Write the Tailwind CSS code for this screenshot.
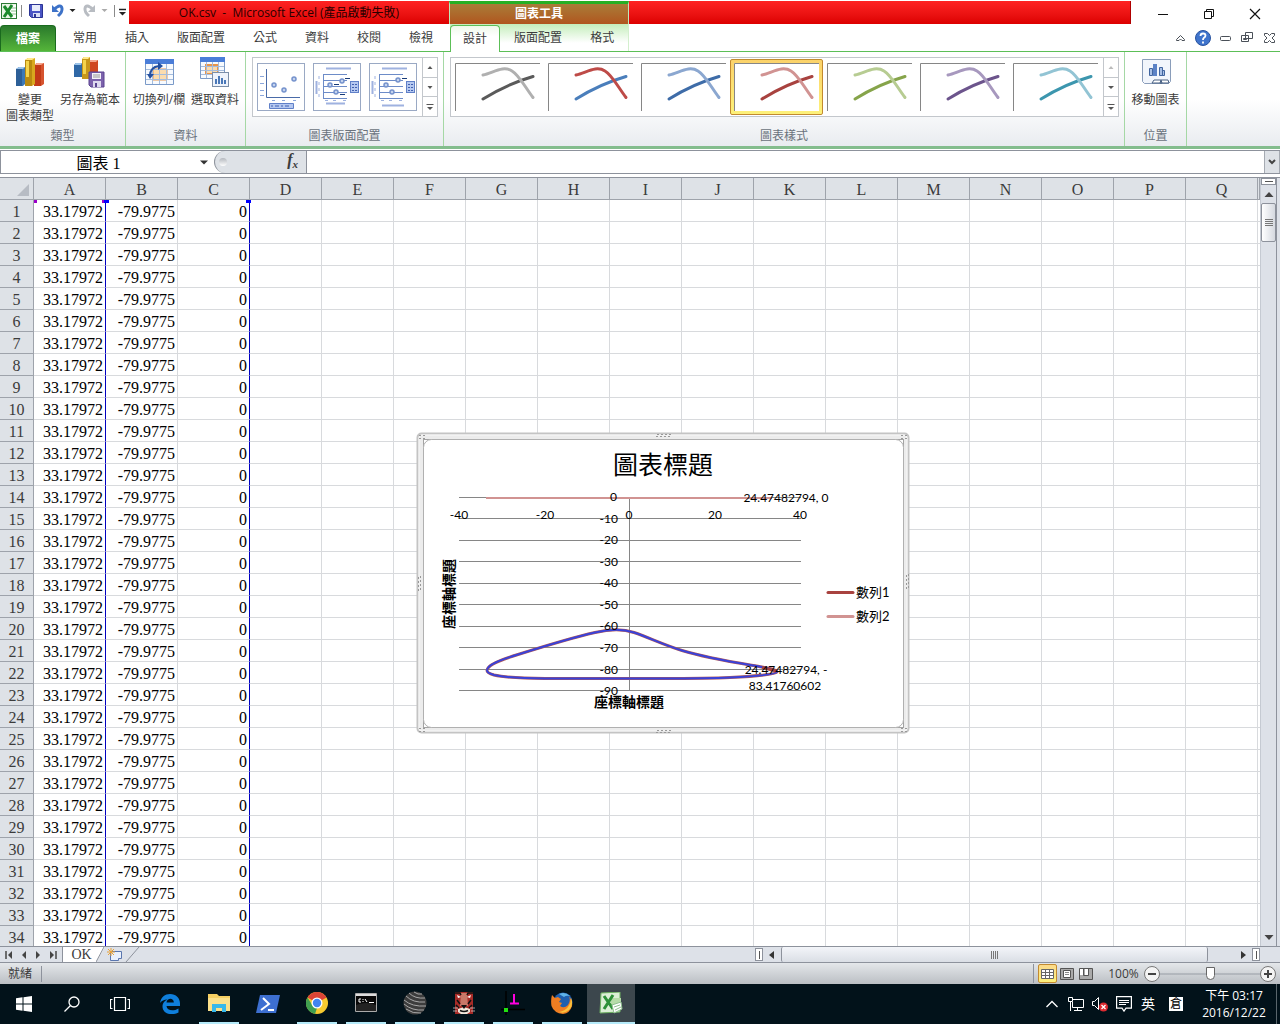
<!DOCTYPE html>
<html lang="zh-Hant">
<head>
<meta charset="utf-8">
<title>OK.csv - Microsoft Excel</title>
<script src="https://cdn.jsdelivr.net/npm/@tailwindcss/browser@4"></script>
</head>
<body class="flex h-screen flex-col overflow-hidden bg-white font-['Open_Sans','Noto_Sans_CJK_TC',sans-serif] text-xs text-[#3b3b3b]">

<!-- Title bar and ribbon tabs -->
<header class="relative flex h-[51px] shrink-0 flex-col">
  <div class="flex h-6 items-stretch">
    <div class="flex w-[129px] shrink-0 items-center">
      <svg class="h-6 w-[129px]" viewBox="0 0 129 24">
        <rect x="1.5" y="3.5" width="15" height="15" fill="#eaf5e6" stroke="#2c7a35"/>
        <path d="M10 5h6v13h-6z" fill="#fff"/><path d="M11 8h5M11 11h5M11 14h5" stroke="#8fc08f"/>
        <path d="M4 6l8 11M12 5L4 17" stroke="#1c8a2c" stroke-width="3"/>
        <path d="M21.500 5v12" stroke="#8a8a8a"/>
        <path d="M29.500 4.500h13v13h-11l-2-2z" fill="#4a55c4" stroke="#2b3494"/><rect x="32" y="5" width="8" height="6" fill="#e8ecfa"/><rect x="33" y="13" width="7" height="4" fill="#d9def5"/><rect x="34" y="14" width="2" height="3" fill="#2b3494"/>
        <path d="M54 9.500Q61 3 62 8.500Q62.500 12 58 16" fill="none" stroke="#3d72c8" stroke-width="3"/><path d="M52 5v7h7z" fill="#3d72c8"/>
        <path d="M69.500 9h6l-3 3z" fill="#222"/>
        <path d="M93 9.500Q86 3 85 8.500Q84.500 12 89 16" fill="none" stroke="#b8bcc2" stroke-width="3"/><path d="M95 5v7h-7z" fill="#b8bcc2"/>
        <path d="M101.500 9h6l-3 3z" fill="#aaa"/>
        <path d="M114.500 5v12" stroke="#8a8a8a"/><path d="M119 9.500h7" stroke="#222" stroke-width="1.500"/><path d="M119 12h7l-3.500 3.500z" fill="#222"/>
      </svg>
    </div>
    <h1 class="mt-px flex w-[320px] shrink-0 items-center justify-center whitespace-pre bg-linear-to-b from-[#ff2222] to-[#dc0000] text-[#2a0000]">OK.csv  -  Microsoft Excel (產品啟動失敗)</h1>
    <div class="mt-px flex w-[180px] shrink-0 items-center justify-center border-x border-t-3 border-x-[#bfe8b8] border-t-[#25b025] bg-linear-to-b from-[#a87c38] to-[#b0551e] font-bold text-white">圖表工具</div>
    <div class="mt-px min-w-0 flex-1 border-r border-[#b00000] bg-linear-to-b from-[#ff2222] to-[#dc0000]"></div>
    <div class="flex w-[149px] shrink-0 items-center justify-end pt-1 pr-[2px]">
      <button aria-label="最小化" class="flex w-[46px] justify-center"><svg class="h-4 w-4" viewBox="0 0 16 16"><path d="M3 8.500h10" stroke="#111"/></svg></button>
      <button aria-label="還原" class="flex w-[46px] justify-center"><svg class="h-4 w-4" viewBox="0 0 16 16" fill="none" stroke="#111"><path d="M3.500 5.500h7v7h-7zM5.500 5.500v-2h7v7h-2"/></svg></button>
      <button aria-label="關閉" class="flex w-[46px] justify-center"><svg class="h-4 w-4" viewBox="0 0 16 16"><path d="M3 3l10 10M13 3L3 13" stroke="#111" stroke-width="1.200"/></svg></button>
    </div>
  </div>
  <nav class="flex flex-1 items-stretch">
    <button class="mt-px mr-[3px] w-14 rounded-t-sm border border-b-0 border-[#1a6a1e] bg-linear-to-b from-[#2a7a2c] to-[#55b53a] font-bold text-white">檔案</button>
    <button class="px-[14px]">常用</button>
    <button class="px-[14px]">插入</button>
    <button class="px-[14px]">版面配置</button>
    <button class="px-[14px]">公式</button>
    <button class="px-[14px]">資料</button>
    <button class="px-[14px]">校閱</button>
    <button class="px-[14px]">檢視</button>
    <div class="ml-[3px] flex border-r border-[#d3efcd] bg-linear-to-b from-[#c4edbb] to-[#ffffff] to-70%">
      <button class="z-10 mt-px -mb-px w-[50px] rounded-t-sm border border-b-0 border-[#5cbf57] bg-linear-to-b from-[#eef9ea] to-white to-40%">設計</button>
      <button class="px-[14px]">版面配置</button>
      <button class="px-[14px]">格式</button>
    </div>
    <div class="ml-auto flex items-center">
      <button aria-label="最小化功能區"><svg class="h-5 w-[22px]" viewBox="0 0 22 20"><path d="M6.500 11.500L10.500 7.500L14.500 11.500V12.500H12L10.500 11L9 12.500H6.500z" fill="#fff" stroke="#4a5058"/></svg></button>
      <button aria-label="說明"><svg class="h-5 w-[22px]" viewBox="0 0 22 20"><circle cx="11" cy="10" r="7.500" fill="#3f74cc" stroke="#2853a0"/><path d="M8.500 8Q8.500 5.500 11 5.500Q13.500 5.500 13.500 7.500Q13.500 8.800 12 9.800Q11 10.500 11 12M11 13.500v2" fill="none" stroke="#fff" stroke-width="1.800"/></svg></button>
      <button aria-label="最小化視窗"><svg class="h-5 w-[22px]" viewBox="0 0 22 20"><rect x="6.500" y="8.500" width="10" height="4" rx="1" fill="#fff" stroke="#4a5058"/></svg></button>
      <button aria-label="還原視窗"><svg class="h-5 w-[22px]" viewBox="0 0 22 20" fill="#fff" stroke="#4a5058"><path d="M9.500 4.500h7v6h-7zM5.500 7.500h7v6h-7z"/><path d="M7.500 10.500h3v1h-3z"/></svg></button>
      <button aria-label="關閉視窗"><svg class="h-5 w-[22px]" viewBox="0 0 22 20"><path d="M6.500 5.500h3l2 2l2-2h3v2l-2.500 2.500l2.500 2.500v2h-3l-2-2l-2 2h-3v-2l2.500-2.500l-2.500-2.500z" fill="#fff" stroke="#4a5058"/></svg></button>
    </div>
  </nav>
</header>

<!-- Ribbon -->
<section class="flex h-[98px] shrink-0 border-t border-b-3 border-t-[#5cbf57] border-b-[#83bd8d] bg-linear-to-b from-white from-50% to-[#e9ecf0]">
  <div class="flex w-[126px] shrink-0 flex-col border-r border-[#a5d8a5]">
    <div class="flex flex-1 items-start">
      <button class="flex w-[60px] flex-col items-center pt-1 leading-4">
        <svg class="mb-1 h-8 w-8" viewBox="0 0 32 32"><path d="M2 13l3-2h6v17l-2 2H2z" fill="#3c79b6"/><path d="M2 13h6v17H2z" fill="#2d5f97"/><path d="M2 13l3-2h6l-2 2z" fill="#9cc4ea"/><path d="M20 9l3-2h7v21l-3 2h-7z" fill="#d6532f"/><path d="M20 9h7v21h-7z" fill="#c23a17"/><path d="M20 9l3-2h7l-3 2z" fill="#f5a58c"/><path d="M11 4l3-2h7v26l-3 2h-7z" fill="#d8a81e"/><path d="M11 4h7v26h-7z" fill="#b98a10"/><path d="M11 4l3-2h7l-3 2z" fill="#ffe98c"/><path d="M12 5h3v16h-3z" fill="#f4d34c"/></svg>
        變更<br>圖表類型</button>
      <button class="flex w-[60px] flex-col items-center pt-1 leading-4">
        <svg class="mb-1 h-8 w-8" viewBox="0 0 32 32"><path d="M0 9l2-2h6v14H0z" fill="#2f68a6"/><path d="M0 9l2-2h6l-1 2z" fill="#9cc4ea"/><path d="M15 6l2-2h7v18h-9z" fill="#cf4621"/><path d="M15 6l2-2h7l-2 2z" fill="#f5a58c"/><path d="M8 3l2-2h6v22H8z" fill="#c7971a"/><path d="M8 3l2-2h6l-2 2z" fill="#ffe98c"/><path d="M9 4h3v14H9z" fill="#f4d34c"/><path d="M15 16h15v15H17l-2-2z" fill="#7c62ac" stroke="#5a4390"/><path d="M18 17h9v6h-9z" fill="#f4f2fa"/><path d="M19 19h7M19 21h7" stroke="#999"/><path d="M19 25h8v6h-8z" fill="#ded8ee"/><path d="M21 27h2v4h-2z" fill="#5a4390"/></svg>
        另存為範本</button>
    </div>
    <div class="h-[18px] text-center leading-4 text-[#6a727c]">類型</div>
  </div>
  <div class="flex w-[120px] shrink-0 flex-col border-r border-[#a5d8a5]">
    <div class="flex flex-1 items-start pl-1">
      <button class="flex w-[58px] flex-col items-center whitespace-nowrap pt-1 leading-4">
        <svg class="mb-1 h-8 w-8" viewBox="0 0 32 32"><path d="M2.500 3.500h28v25h-28z" fill="#f7fafe" stroke="#7a9ac8"/><path d="M2 3h29v5H2z" fill="#4a7dd8"/><path d="M10 13h14v11H10z" fill="#fbdcae" stroke="#e8954a"/><path d="M3 13.500h27M3 18.500h27M3 23.500h27M9.500 8v20M16.500 8v20M23.500 8v20" stroke="#a5bcdc"/><path d="M7 20Q7 11 16 10" fill="none" stroke="#2450a0" stroke-width="2"/><path d="M15 6l5 4l-5 4zM4 18h7l-4 5z" fill="#2450a0"/></svg>
        切換列/欄</button>
      <button class="flex w-[54px] flex-col items-center whitespace-nowrap pt-1 leading-4">
        <svg class="mb-1 h-8 w-8" viewBox="0 0 32 32"><path d="M1.500 1.500h24v21h-24z" fill="#f7fafe" stroke="#7a9ac8"/><path d="M1 1h25v5H1z" fill="#4a7dd8"/><path d="M7 9h12v9H7z" fill="#fbdcae" stroke="#e8954a" stroke-width="2"/><path d="M2 10.500h23M2 14.500h23M2 18.500h23M7.500 6v16M13.500 6v16M19.500 6v16" stroke="#a5bcdc"/><rect x="13.500" y="16.500" width="16" height="14" fill="#eef3fb" stroke="#7b8ea8"/><path d="M17 28v-5M20 28v-8M23 28v-6M26 28v-4" stroke="#4a78b8" stroke-width="2"/></svg>
        選取資料</button>
    </div>
    <div class="h-[18px] text-center leading-4 text-[#6a727c]">資料</div>
  </div>
  <div class="flex w-[198px] shrink-0 flex-col items-center border-r border-[#a5d8a5]">
    <div class="mt-[5px] flex h-[60px] w-[186px] border border-[#c3c7cc] bg-white">
      <div class="flex flex-1 items-center gap-2 pl-1">
        <button aria-label="版面配置 1"><svg class="h-12 w-12" viewBox="0 0 48 48"><rect x=".5" y=".5" width="47" height="47" fill="#fff" stroke="#9aa9c4"/><path d="M9.500 6v28.500H43" fill="none" stroke="#4a6ba8"/><path d="M3 13.500h4M3 20.500h4M3 27.500h4M3 32.500h4M15 37.500h3M25 37.500h3M36 37.500h3" stroke="#8ba7dc"/><g fill="#c5d3ee" stroke="#7592cc" stroke-width="1.500"><circle cx="17" cy="22" r="2"/><circle cx="27" cy="27" r="2"/><circle cx="37" cy="16" r="2"/></g><path d="M12.500 40.500h24v5h-24z" fill="#b5c8f0" stroke="#6080c8"/><path d="M14 43h20" stroke="#4060b0" stroke-dasharray="2 2 4 2"/></svg></button>
        <button aria-label="版面配置 2"><svg class="h-12 w-12" viewBox="0 0 48 48"><rect x=".5" y=".5" width="47" height="47" fill="#fff" stroke="#9aa9c4"/><path d="M13 5.500h25M13 40.500h19M3.500 18v13" stroke="#9fb2e0" stroke-width="2"/><path d="M10.500 11v25M10 11.500h24M10 17.500h24M10 23.500h24M10 29.500h24M10 35.500h24" stroke="#6d8cc8"/><path d="M6 13v22M12 37.500h3M20 37.500h3M30 37.500h3" stroke="#9fb2e0" stroke-dasharray="3 3"/><g fill="#c5d3ee" stroke="#7592cc" stroke-width="1.500"><circle cx="17" cy="22" r="2"/><circle cx="23" cy="29" r="2"/><circle cx="29" cy="18" r="2"/></g><path d="M32 15.500h5M21 21.500h5M27 31.500h5" stroke="#173a78"/><rect x="37.500" y="18.500" width="8" height="11" fill="#b5c8f0" stroke="#6080c8"/><path d="M39 21.500h5M39 24.500h5M39 27.500h5" stroke="#4060b0" stroke-dasharray="2 1"/></svg></button>
        <button aria-label="版面配置 3"><svg class="h-12 w-12" viewBox="0 0 48 48"><rect x=".5" y=".5" width="47" height="47" fill="#fff" stroke="#9aa9c4"/><path d="M13 5.500h25M13 42.500h22M3.500 18v13" stroke="#9fb2e0" stroke-width="2"/><path d="M10.500 11v25M10 11.500h24M10 17.500h24M10 23.500h24M10 29.500h24M10 35.500h24" stroke="#6d8cc8"/><path d="M6 13v22M12 37.500h3M20 37.500h3M30 37.500h3" stroke="#9fb2e0" stroke-dasharray="3 3"/><g fill="#c5d3ee" stroke="#7592cc" stroke-width="1.500"><circle cx="17" cy="22" r="2"/><circle cx="23" cy="29" r="2"/><circle cx="29" cy="17" r="2"/></g><path d="M33 15.500h5" stroke="#173a78"/><rect x="37.500" y="18.500" width="8" height="11" fill="#b5c8f0" stroke="#6080c8"/><path d="M39 21.500h5M39 24.500h5M39 27.500h5" stroke="#4060b0" stroke-dasharray="2 1"/></svg></button>
      </div>
      <div class="flex w-[15px] flex-col divide-y divide-[#c3c7cc] border-l border-[#c3c7cc]">
        <button aria-label="上" class="flex flex-1 items-center justify-center"><svg class="h-2 w-2" viewBox="0 0 8 8"><path d="M1.500 6h5l-2.500-3z" fill="#555"/></svg></button>
        <button aria-label="下" class="flex flex-1 items-center justify-center"><svg class="h-2 w-2" viewBox="0 0 8 8"><path d="M1.500 3h5l-2.500 3z" fill="#555"/></svg></button>
        <button aria-label="其他" class="flex flex-1 items-center justify-center"><svg class="h-2 w-2" viewBox="0 0 8 8"><path d="M0.500 1.500h7" stroke="#555"/><path d="M1 4h6l-3 3z" fill="#555"/></svg></button>
      </div>
    </div>
    <div class="mt-auto h-[18px] leading-4 text-[#6a727c]">圖表版面配置</div>
  </div>
  <div class="flex w-[681px] shrink-0 flex-col items-center border-r border-[#a5d8a5]">
    <div class="mt-[5px] flex h-[60px] w-[669px] border border-[#c3c7cc] bg-white">
      <div id="styles" class="flex flex-1 items-center"></div>
      <div class="flex w-[15px] flex-col divide-y divide-[#c3c7cc] border-l border-[#c3c7cc]">
        <button aria-label="上" class="flex flex-1 items-center justify-center"><svg class="h-2 w-2" viewBox="0 0 8 8"><path d="M1.500 6h5l-2.500-3z" fill="#bbb"/></svg></button>
        <button aria-label="下" class="flex flex-1 items-center justify-center"><svg class="h-2 w-2" viewBox="0 0 8 8"><path d="M1 3h6l-3 3z" fill="#555"/></svg></button>
        <button aria-label="其他" class="flex flex-1 items-center justify-center"><svg class="h-2 w-2" viewBox="0 0 8 8"><path d="M0.500 1.500h7" stroke="#555"/><path d="M1 4h6l-3 3z" fill="#555"/></svg></button>
      </div>
    </div>
    <div class="mt-auto h-[18px] leading-4 text-[#6a727c]">圖表樣式</div>
  </div>
  <div class="flex w-[62px] shrink-0 flex-col border-r border-[#a5d8a5]">
    <button class="flex flex-1 flex-col items-center whitespace-nowrap pt-1 leading-4">
      <svg class="mb-1 h-8 w-8" viewBox="0 0 32 32"><path d="M2.500 3.500h28v22l-2 2h-24l-2-2z" fill="#f2f6fc" stroke="#8a9dba"/><path d="M12 27l2-3h7l1 3zM20 27l1-3h7l1 3z" fill="#fff" stroke="#4a6284"/><path d="M9.500 12.500h3v7h-3zM19.500 11.500h3v8h-3zM22.500 14.500h2v5h-2z" fill="#a8c0e6" stroke="#41659f"/><path d="M13 8h4v12h-4z" fill="#5b82c6"/></svg>
      移動圖表</button>
    <div class="h-[18px] text-center leading-4 text-[#6a727c]">位置</div>
  </div>
</section>

<!-- Formula bar -->
<section class="mt-px flex h-6 shrink-0 border-y border-[#8d929c] bg-[#dee2e7]">
  <div class="flex w-[214px] shrink-0 border-l border-[#8d929c] bg-white">
    <input aria-label="名稱方塊" value="圖表 1" class="w-[195px] min-w-0 bg-transparent pt-[3px] text-center font-['Liberation_Serif','Noto_Sans_CJK_TC',serif] text-base leading-[18px] text-black">
    <button aria-label="名稱清單" class="flex flex-1 items-center"><svg class="h-4 w-4" viewBox="0 0 16 16"><path d="M4 6.500h8l-4 4z" fill="#333"/></svg></button>
  </div>
  <div class="flex w-[93px] shrink-0 items-center justify-between border-r border-[#8d929c] bg-white">
    <div class="flex h-full flex-1 items-center justify-between rounded-l-full border-l border-[#8d929c] bg-[#dee2e7] pr-0 pl-1">
      <span class="size-2 rounded-full bg-linear-to-b from-[#b4b8be] to-white"></span>
      <button aria-label="插入函數" class="px-2 pb-1 font-['Liberation_Serif',serif] text-base leading-none font-bold italic"><i>f</i><sub class="text-[11px]">x</sub></button>
    </div>
  </div>
  <input aria-label="資料編輯列" class="min-w-0 flex-1 bg-white px-1 text-base">
  <button aria-label="展開" class="flex w-4 items-center justify-center border-x border-[#a5aab2]"><svg class="h-3 w-3" viewBox="0 0 12 12"><path d="M3 4l3 3l3-3" fill="none" stroke="#444" stroke-width="2"/></svg></button>
</section>

<!-- Worksheet -->
<main class="mt-[3px] flex min-h-0 flex-1 border-t border-[#8d929c]">
  <div class="relative min-w-0 flex-1 overflow-hidden">
    <table class="w-full table-fixed border-separate border-spacing-0 font-['Liberation_Serif',serif] text-base leading-[18px] text-black">
      <colgroup id="cols"></colgroup>
      <thead><tr id="letters"></tr></thead>
      <tbody id="rows"></tbody>
    </table>
    <div class="absolute top-[22px] left-[34px] size-[3px] bg-[#9a00c8]"></div>
    <div class="absolute top-[22px] left-[102px] size-[3px] bg-[#9a00c8]"></div>
    <div class="absolute top-[22px] left-[104px] h-[3px] w-[5px] bg-[#0000ff]"></div>
    <div class="absolute top-[22px] left-[246px] h-[3px] w-[5px] bg-[#0000ff]"></div>

    <!-- Chart object floating over the cells -->
    <svg class="absolute top-[254px] left-[416px] h-[302px] w-[494px] font-['Lato','Noto_Sans_CJK_TC',sans-serif] text-xs" viewBox="416 432 494 302" role="img" aria-label="圖表標題">
      <rect x="417.500" y="433.500" width="491" height="299" rx="4" fill="#ececec" stroke="#c4c4c4" stroke-width="2"/>
      <rect x="419" y="435" width="488" height="296" rx="3" fill="none" stroke="#f8f8f8" stroke-width="1"/>
      <rect x="423.500" y="439.500" width="480" height="288" fill="#fff" stroke="#a3a3a3"/>
      <rect x="423.500" y="439.500" width="480" height="288" rx="8" fill="#fff" stroke="#b0b0b0"/>
      <g stroke="#999" stroke-width="1" stroke-dasharray="2 2">
        <path d="M657 434.500h14M656 436.500h14M657 730.500h14M656 732.500h14M418.500 577v14M420.500 576v14M906.500 575v14M908.500 574v14M419 435.500h6M419 438.500h6M901 435.500h6M901 438.500h6M419 728.500h6M419 731.500h6M901 728.500h6M901 731.500h6"/>
      </g>
      <text x="663" y="474" text-anchor="middle" class="text-[25px]" fill="#000">圖表標題</text>
      <path d="M459 497.500h342M459 518.500h342M459 540.500h342M459 561.500h342M459 583.500h342M459 604.500h342M459 626.500h342M459 647.500h342M459 669.500h342M459 690.500h342M629.500 497v194" stroke="#868686"/>
      <path d="M486 498h286" stroke="#d19392" stroke-width="2"/>
      <path d="M487 670.500C487 665 500 660 518 654.500C545 646 575 637 595 632.500C608 629.500 622 628.500 634 632.500C650 638 664 645 682 650.500C710 659 745 664 762 667C770 668.500 777 670 777 672C776 674.500 750 676.500 730 677.500C710 678.500 690 678.500 660 678.500H545C525 678.500 505 677.500 494 675C489 673.500 487 672 487 670.500z" fill="none" stroke="#b05a5a" stroke-width="3"/>
      <path d="M487 670.500C487 665 500 660 518 654.500C545 646 575 637 595 632.500C608 629.500 622 628.500 634 632.500C650 638 664 645 682 650.500C710 659 745 664 762 667C770 668.500 777 670 777 672C776 674.500 750 676.500 730 677.500C710 678.500 690 678.500 660 678.500H545C525 678.500 505 677.500 494 675C489 673.500 487 672 487 670.500z" fill="none" stroke="#3a42d8" stroke-width="2"/>
      <path d="M762 667.500l14 3.500" stroke="#a8423f" stroke-width="3"/>
      <g fill="#000" text-anchor="middle">
        <text x="459" y="519">-40</text><text x="545" y="519">-20</text><text x="629" y="519">0</text><text x="715" y="519">20</text><text x="800" y="519">40</text>
        <text x="786" y="502">24.47482794, 0</text>
        <text x="786" y="674">24.47482794, -</text><text x="785" y="690">83.41760602</text>
      </g>
      <g fill="#000" text-anchor="end">
        <text x="617" y="501">0</text><text x="618" y="523">-10</text><text x="618" y="544">-20</text><text x="618" y="566">-30</text><text x="618" y="587">-40</text><text x="618" y="609">-50</text><text x="618" y="630">-60</text><text x="618" y="652">-70</text><text x="618" y="674">-80</text><text x="618" y="695">-90</text>
      </g>
      <g fill="#000" class="text-[14px] font-bold" text-anchor="middle">
        <text x="629" y="707">座標軸標題</text>
        <text transform="translate(454 594) rotate(-90)">座標軸標題</text>
      </g>
      <path d="M828 592.500h25" stroke="#a8423f" stroke-width="3" stroke-linecap="round"/>
      <path d="M828 616.500h25" stroke="#d19392" stroke-width="3" stroke-linecap="round"/>
      <text x="856" y="597" class="text-[13px]" fill="#000">數列1</text>
      <text x="856" y="621" class="text-[13px]" fill="#000">數列2</text>
    </svg>
  </div>
  <div class="flex w-4 shrink-0 flex-col items-center border-l border-[#c5cad2] bg-[#dde1e8]">
    <div class="flex h-[7px] w-[15px] items-center justify-center border border-[#8d929c] bg-white"><span class="h-px w-2 bg-[#555]"></span></div>
    <button aria-label="向上捲動" class="flex h-[18px] items-center"><svg class="h-3 w-3" viewBox="0 0 12 12"><path d="M1.500 9h9l-4.500-5z" fill="#444"/></svg></button>
    <div class="flex h-[39px] w-[15px] flex-col items-center justify-center gap-px rounded-xs border border-[#8d929c] bg-linear-to-r from-white to-[#d5d9e0]"><span class="h-px w-2 bg-[#777]"></span><span class="h-px w-2 bg-[#777]"></span><span class="h-px w-2 bg-[#777]"></span><span class="h-px w-2 bg-[#777]"></span></div>
    <button aria-label="向下捲動" class="mt-auto flex h-[18px] items-center"><svg class="h-3 w-3" viewBox="0 0 12 12"><path d="M1.500 4h9l-4.500 5z" fill="#444"/></svg></button>
  </div>
  <div class="w-1 shrink-0 border-l border-[#8d929c] bg-[#dde1e8]"></div>
</main>

<!-- Sheet tabs and horizontal scroll bar -->
<section class="flex h-[17px] shrink-0 border-y border-[#8d929c] bg-[#dde1e8]">
  <div class="flex w-[62px] shrink-0 items-center justify-around pr-[2px] pl-[2px]">
    <button aria-label="第一張"><svg class="size-2" viewBox="0 0 8 8"><path d="M1 0v8" stroke="#444" stroke-width="1.500"/><path d="M7 0v8l-4-4z" fill="#444"/></svg></button>
    <button aria-label="上一張"><svg class="size-2" viewBox="0 0 8 8"><path d="M6 0v8l-4-4z" fill="#444"/></svg></button>
    <button aria-label="下一張"><svg class="size-2" viewBox="0 0 8 8"><path d="M2 0v8l4-4z" fill="#444"/></svg></button>
    <button aria-label="最後一張"><svg class="size-2" viewBox="0 0 8 8"><path d="M7 0v8" stroke="#444" stroke-width="1.500"/><path d="M1 0v8l4-4z" fill="#444"/></svg></button>
  </div>
  <button class="w-[34px] shrink-0 border-l border-[#8d929c] bg-white pl-1 font-['Liberation_Serif',serif] text-sm leading-[15px]">OK</button>
  <button aria-label="插入工作表" class="shrink-0"><svg class="h-[15px] w-11" viewBox="0 0 44 15"><path d="M0 0h9L0 15z" fill="#fff"/><path d="M8 0L0 15M43 0L30 15" fill="none" stroke="#8d929c"/><path d="M14.500 4.500h11v7h-3v2h-8z" fill="#eaf1fc" stroke="#5a76ae"/><path d="M15 1v8M11 5h8M12 2l6 6M18 2l-6 6" stroke="#e8a33a"/></svg></button>
  <div class="ml-auto flex w-[525px] shrink-0">
    <div class="my-px flex w-2 items-center justify-center border border-[#8d929c] bg-white"><span class="h-2 w-px bg-[#555]"></span></div>
    <button aria-label="向左捲動" class="flex w-[18px] items-center justify-center"><svg class="h-2 w-2" viewBox="0 0 8 8"><path d="M6 0v8l-5-4z" fill="#333"/></svg></button>
    <div class="flex w-[427px] items-center justify-center gap-px rounded-xs border-x border-[#8d929c] bg-linear-to-b from-[#f3f5f9] to-[#dadee5]"><span class="h-2 w-px bg-[#777]"></span><span class="h-2 w-px bg-[#777]"></span><span class="h-2 w-px bg-[#777]"></span><span class="h-2 w-px bg-[#777]"></span></div>
    <button aria-label="向右捲動" class="ml-auto flex w-[18px] items-center justify-center"><svg class="h-2 w-2" viewBox="0 0 8 8"><path d="M2 0v8l5-4z" fill="#333"/></svg></button>
    <div class="my-px mr-5 flex w-2 items-center justify-center border border-[#8d929c] bg-white"><span class="h-2 w-px bg-[#555]"></span></div>
  </div>
</section>

<!-- Status bar -->
<footer class="flex h-[21px] shrink-0 items-center bg-linear-to-b from-[#e4e7ea] to-[#bbbfc4]">
  <span class="w-[42px] shrink-0 border-r border-[#8d929c] pl-2">就緒</span>
  <div class="ml-auto flex items-center border-l border-[#8d929c] pl-1">
    <button aria-label="標準模式" class="flex h-[19px] w-[19px] items-center justify-center rounded-xs border border-[#c28a30] bg-linear-to-b from-[#fbd98a] to-[#fdf17a]"><svg class="h-3 w-[13px]" viewBox="0 0 13 12"><path d="M.5 1.500h12v9H.5zM.5 4.500h12M.5 7.500h12M4.500 1.500v9M8.500 1.500v9" fill="#fff" stroke="#666"/></svg></button>
    <button aria-label="整頁模式" class="w-[19px]"><svg class="mx-auto h-3 w-[14px]" viewBox="0 0 14 12"><path d="M.5.500h13v11H.5z" fill="#aaa" stroke="#555"/><path d="M3.500 2.500h7v7h-7z" fill="#fff" stroke="#555"/><path d="M5 4.500h4M5 6.500h4" stroke="#888"/></svg></button>
    <button aria-label="分頁預覽" class="w-[19px]"><svg class="mx-auto h-3 w-[14px]" viewBox="0 0 14 12"><path d="M.5.500h13v11H.5z" fill="#aaa" stroke="#555"/><path d="M1 1h3v6H1zM6 1h3v6H6z" fill="#fff"/><path d="M4.500 0v7.500h5V0" fill="none" stroke="#555"/></svg></button>
    <button class="w-[49px] pl-2">100%</button>
    <button aria-label="縮小"><svg class="size-4" viewBox="0 0 16 16"><circle cx="8" cy="8" r="7.500" fill="#f4f4f4" stroke="#777"/><path d="M4 8h8" stroke="#444" stroke-width="2"/></svg></button>
    <input type="range" aria-label="縮放" min="0" max="100" value="50" class="h-4 w-[100px] appearance-none bg-linear-to-b from-transparent from-45% via-[#858b94] via-50% to-transparent to-55% [&::-webkit-slider-thumb]:h-[13px] [&::-webkit-slider-thumb]:w-[9px] [&::-webkit-slider-thumb]:appearance-none [&::-webkit-slider-thumb]:rounded-b-full [&::-webkit-slider-thumb]:border [&::-webkit-slider-thumb]:border-[#666] [&::-webkit-slider-thumb]:bg-white">
    <button aria-label="放大" class="mr-1"><svg class="size-4" viewBox="0 0 16 16"><circle cx="8" cy="8" r="7.500" fill="#f4f4f4" stroke="#777"/><path d="M4 8h8M8 4v8" stroke="#444" stroke-width="2"/></svg></button>
  </div>
</footer>

<!-- Taskbar -->
<nav class="flex h-10 shrink-0 items-stretch bg-[#02121a] text-white">
  <button aria-label="開始" class="flex w-12 items-center justify-center"><svg class="size-4" viewBox="0 0 16 16"><path d="M0 2.200l6.500-.9v6.200H0zM7.500 1.200L16 0v7.500H7.500zM0 8.500h6.500v6.200L0 13.800zM7.500 8.500H16V16l-8.500-1.200z" fill="#fff"/></svg></button>
  <button aria-label="搜尋" class="flex w-12 items-center justify-center"><svg class="size-4" viewBox="0 0 16 16" fill="none" stroke="#fff" stroke-width="1.300"><circle cx="10" cy="6" r="5"/><path d="M6.500 9.500L.5 15.500"/></svg></button>
  <button aria-label="工作檢視" class="mr-[2px] flex w-12 items-center justify-center"><svg class="h-4 w-5" viewBox="0 0 20 16" fill="none" stroke="#fff" stroke-width="1.200"><path d="M4.500 1.500h11v13h-11zM2.500 3.500h-2v9h2M17.500 3.500h2v9h-2"/></svg></button>
  <div class="flex gap-px">
    <button aria-label="Edge" class="flex w-12 items-center justify-center"><svg class="size-5" viewBox="0 0 20 20"><path d="M0 9C1 3 5 0 10 0c6 0 10 4 10 9.500V12H6.500c.5 5 7 5.500 12 2.500v4C12 22 2.500 20 2.500 12.500 2.500 9 5 6.500 7.500 5.500 4 5.500 1.500 7 0 9zM6.500 8.500h7.300C14 3.500 7 3.500 6.500 8.500z" fill="#0f7fdc"/></svg></button>
    <button aria-label="檔案總管" class="flex w-12 flex-col items-center"><svg class="my-auto h-5 w-[22px]" viewBox="0 0 22 20"><path d="M0 1h9l2 2h11v15H0z" fill="#f5cf62"/><path d="M0 5h22v13H0z" fill="#fbe08a"/><path d="M4 19v-8h14v8h-4v-4H8v4z" fill="#38b8ea"/></svg><span class="h-[2px] w-10 bg-[#b5eaf9]"></span></button>
    <button aria-label="PowerShell" class="flex w-12 items-center justify-center"><svg class="h-5 w-6" viewBox="0 0 24 20"><path d="M4 1h20l-4 18H0z" fill="#3d6fd0"/><path d="M7 4l6 6l-8 6M12 16h6" fill="none" stroke="#fff" stroke-width="2"/></svg></button>
    <button aria-label="Chrome" class="flex w-12 flex-col items-center"><svg class="my-auto size-[22px]" viewBox="0 0 22 22"><circle cx="11" cy="11" r="11" fill="#f7ca30"/><path d="M11 11L1.500 5.500A11 11 0 0 1 20.500 5.500z" fill="#dc4436"/><path d="M1.500 5.500L6.500 13.500L11 16L9 22A11 11 0 0 1 1.500 5.500z" fill="#3f9f50"/><circle cx="11" cy="11" r="5.500" fill="#fff"/><circle cx="11" cy="11" r="4.200" fill="#4285f0"/></svg><span class="h-[2px] w-10 bg-[#b5eaf9]"></span></button>
    <button aria-label="命令提示字元" class="flex w-12 flex-col items-center"><svg class="my-auto h-5 w-6" viewBox="0 0 24 20"><path d="M1.500.500h21v18h-21z" fill="#080808" stroke="#aaa"/><path d="M2 1h20v2H2z" fill="#ddd"/><path d="M7 6H5v3h2M9 6v1M9 8v1M11 6l2 3M15 9.500h5" fill="none" stroke="#fff"/><path d="M2 12q10-4 20 0v6H2z" fill="#222"/></svg><span class="h-[2px] w-10 bg-[#b5eaf9]"></span></button>
    <button aria-label="球體" class="flex w-12 flex-col items-center"><svg class="my-auto size-6" viewBox="0 0 24 24"><circle cx="12" cy="12" r="11.500" fill="#3d3d3d"/><path d="M3 5q7 7 19 6M1 9q8 7 22 6M1 13q8 7 20 6M3 18q7 5 15 4M6 2q6 6 16 5M11 1q4 3 8 2" fill="none" stroke="#a8a8a8"/></svg><span class="h-[2px] w-10 bg-[#b5eaf9]"></span></button>
    <button aria-label="老虎" class="flex w-12 flex-col items-center"><svg class="my-auto h-6 w-[22px]" viewBox="0 0 22 24"><path d="M2 1h18v22H2z" fill="#a82c28"/><path d="M8 2h6l1 13H7z" fill="#c87868"/><path d="M2 2h5l1 2M20 2h-5l-1 2M4 9l3 4M18 9l-3 4M3 14l3 3M19 14l-3 3" fill="none" stroke="#111" stroke-width="1.500"/><path d="M4 4l4 2-3 1zM18 4l-4 2 3 1z" fill="#fff"/><path d="M5 18l6-2 6 2v3l-3 2H8l-3-2z" fill="#f1e8dc"/><path d="M8 14h6l-3 4z" fill="#111"/><path d="M7 19.500q4 2 8 0" fill="none" stroke="#111" stroke-width="1.500"/><path d="M0 17h5M17 17h5M0 20h4M18 20h4" stroke="#ddd" stroke-width=".7"/></svg><span class="h-[2px] w-10 bg-[#b5eaf9]"></span></button>
    <button aria-label="座標" class="flex w-12 flex-col items-center"><svg class="my-auto h-6 w-6" viewBox="0 0 24 24"><path d="M5 0v24M0 18.500h24" stroke="#000" stroke-width="1.500"/><path d="M13 3v9M9 12.500h9" stroke="#ff00e0" stroke-width="2"/><path d="M3 17h4v4H3z" fill="#20e010"/></svg><span class="h-[2px] w-10 bg-[#b5eaf9]"></span></button>
    <button aria-label="Firefox" class="flex w-12 flex-col items-center"><svg class="my-auto size-[22px]" viewBox="0 0 22 22"><circle cx="12" cy="10" r="9.500" fill="#1f5fae"/><path d="M8 2q6-3 11 2q-4-1-6 1z" fill="#5fb4e8"/><path d="M1 3l3 3 3-1q1 1 3 2l-2 3 3 1-2 3q4 3 8-1 3-4 1-9 4 5 3 10-2 7-9 8Q3 21 .5 14-.5 8 1 3z" fill="#ef7e22"/><path d="M20 6q3 7-2 12-5 4-10 2 6-1 9-5 3-4 3-9z" fill="#fbc23c"/></svg><span class="h-[2px] w-10 bg-[#b5eaf9]"></span></button>
    <button aria-label="Excel" class="flex w-12 flex-col items-center bg-[#3c474d]"><svg class="my-auto h-[22px] w-6" viewBox="0 0 24 22"><path d="M2 1l19-1v20L1 21z" fill="#dcefd6" stroke="#6cb060"/><path d="M12 6h10v8H12z" fill="#b6dca8"/><path d="M5 4l9 13M14 3L5 17" stroke="#2d9038" stroke-width="3"/><path d="M13 13l9-3 1 7-8 4z" fill="#fff" stroke="#8fc08f"/><path d="M15 15l6-2M16 18l6-3" stroke="#8fc08f"/></svg><span class="h-[2px] w-12 bg-[#b5eaf9]"></span></button>
  </div>
  <div class="ml-auto flex items-center">
    <button aria-label="顯示隱藏的圖示" class="flex w-6 justify-center"><svg class="h-4 w-3" viewBox="0 0 12 16"><path d="M.5 11L6 5.500L11.500 11" fill="none" stroke="#fff" stroke-width="1.300"/></svg></button>
    <button aria-label="網路" class="flex w-6 justify-center"><svg class="size-4" viewBox="0 0 16 16" fill="none" stroke="#fff"><path d="M5 3.500h10.500v8H4.500V6M9.500 12v2.500M6 14.500h8M.5 1.500h4v4h-4zM2.500 6v9"/></svg></button>
    <button aria-label="音量" class="flex w-6 justify-center"><svg class="size-4" viewBox="0 0 16 16"><path d="M.5 5.500h2l4-4v12l-4-4h-2z" fill="none" stroke="#fff"/><circle cx="11.500" cy="11" r="4.500" fill="#dc2a30"/><path d="M9.500 9l4 4M13.500 9l-4 4" stroke="#fff" stroke-width="1.300"/></svg></button>
    <button aria-label="通知" class="flex w-6 justify-center"><svg class="size-4" viewBox="0 0 16 16" fill="none" stroke="#fff" stroke-width="1.200"><path d="M.6.600h14.800v11.500H10l-2 3-2-3H.6zM3 4.500h10M3 6.500h10M3 8.500h7"/></svg></button>
    <button class="w-6 text-sm">英</button>
    <button class="ml-1 w-6"><span class="mx-auto flex size-[14px] items-center justify-center bg-white text-black">倉</span></button>
    <button class="mr-1 ml-2 w-[76px] whitespace-nowrap text-center text-xs leading-[17px]">下午 03:17<br>2016/12/22</button>
    <span class="mr-[3px] h-10 w-px bg-[#5a666c]"></span>
  </div>
</nav>

<script>
const styles = [['#5a5a5a','#b0b0b0'],['#4a7ebb','#be4b48'],['#3e6ca8','#8ba7d0'],['#a8423f','#d19392'],['#86a44a','#b7cc92'],['#6c548c','#a798be'],['#3c96ae','#92c4d4']];
document.getElementById('styles').innerHTML = styles.map(([dark, light], i) =>
  `<button aria-label="樣式 ${i + 1}" class="${i === 3 ? 'flex h-14 w-[93px] items-center rounded-xs border border-[#c28a30] bg-linear-to-b from-[#fbd26a] to-[#fdf17a] pl-[3px]' : 'flex h-14 w-[93px] items-center pl-1'}">
    <svg class="${i === 3 ? 'h-12 w-[85px] bg-white' : 'h-12 w-[85px]'}" viewBox="0 0 85 48" fill="none"><path d="M.5 48V.5H85" stroke="#868686"/><path d="M28 36Q52 21 78 13.500" stroke="${dark}" stroke-width="3" stroke-linecap="round"/><path d="M28 12C38 10 48 2 57 8C64 12 70 24 78 34.500" stroke="${light}" stroke-width="3" stroke-linecap="round"/></svg>
  </button>`).join('');

const letters = [...'ABCDEFGHIJKLMNOPQ'];
document.getElementById('cols').innerHTML = '<col class="w-[34px]">' + letters.map(() => '<col class="w-[72px]">').join('') + '<col>';
const head = 'h-[22px] border-r border-b border-[#9ea3ab] bg-[#dee2e7] p-0 pt-[3px] text-center font-normal text-[#3b3b3b]';
document.getElementById('letters').innerHTML =
  `<th class="h-[22px] border-r border-b border-[#9ea3ab] bg-[#dee2e7] p-0"><svg class="ml-auto h-5 w-[18px]" viewBox="0 0 18 20"><path d="M14 5v12H2z" fill="#b7bcc4"/></svg></th>` +
  letters.map(l => `<th class="${head}">${l}</th>`).join('') + `<th class="${head}"></th>`;
const cell = 'h-[22px] border-r border-b border-[#d8dadd] p-0 pt-[3px] pr-[2px] text-right';
const edge = 'h-[22px] border-r border-b border-r-[#0000c0] border-b-[#d8dadd] p-0 pt-[3px] pr-[2px] text-right';
let html = '';
for (let r = 1; r <= 34; r++) {
  const values = ['33.17972', '-79.9775', '0'];
  html += `<tr><th class="h-[22px] border-r border-b border-[#9ea3ab] bg-[#dee2e7] p-0 pt-[3px] text-center font-normal text-[#3b3b3b]">${r}</th>` +
    letters.map((l, c) => `<td class="${c === 0 || c === 2 ? edge : cell}">${values[c] || ''}</td>`).join('') +
    '<td class="h-[22px] border-b border-[#d8dadd] p-0"></td></tr>';
}
document.getElementById('rows').innerHTML = html;
</script>
</body>
</html>
